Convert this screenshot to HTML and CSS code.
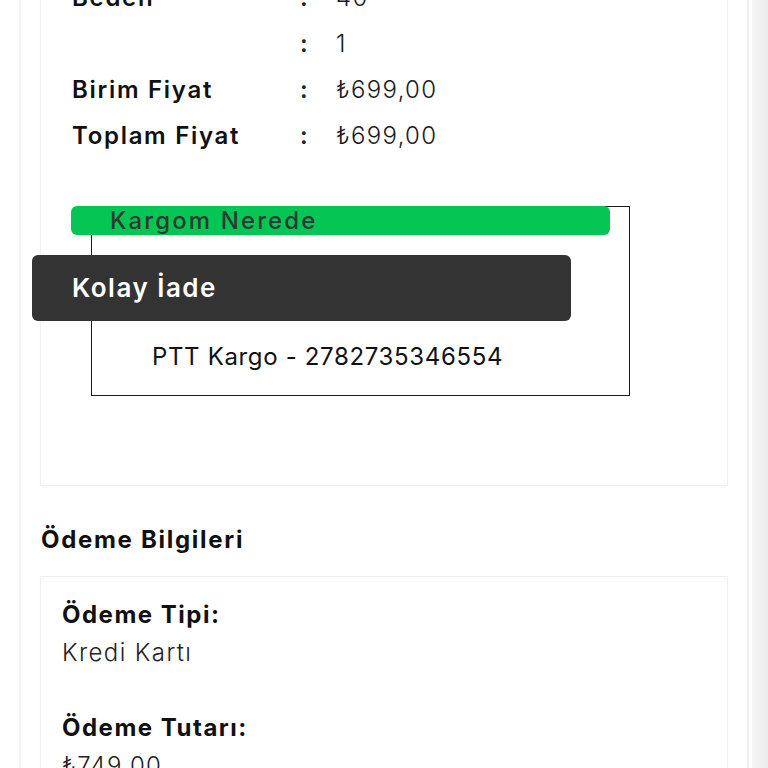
FILE: index.html
```html
<!DOCTYPE html>
<html lang="tr">
<head>
<meta charset="utf-8">
<title>Sipariş Detayı</title>
<link rel="stylesheet" href="styles.css">
</head>
<body>
<div class="page">
  <div class="frame">
    <div class="card order-card">
      <div class="info-row"><span class="label">Beden</span><span class="colon">:</span><span class="value">40</span></div>
      <div class="info-row"><span class="label"></span><span class="colon">:</span><span class="value">1</span></div>
      <div class="info-row"><span class="label">Birim Fiyat</span><span class="colon">:</span><span class="value">₺699,00</span></div>
      <div class="info-row"><span class="label">Toplam Fiyat</span><span class="colon">:</span><span class="value">₺699,00</span></div>
      <div class="track-box">
        <div class="track-btn">Kargom Nerede</div>
        <div class="return-btn">Kolay İade</div>
        <div class="track-text">PTT Kargo - 2782735346554</div>
      </div>
    </div>
    <h3 class="section-title">Ödeme Bilgileri</h3>
    <div class="card pay-card">
      <div class="pay-label">Ödeme Tipi:</div>
      <div class="pay-value">Kredi Kartı</div>
      <div class="pay-label second">Ödeme Tutarı:</div>
      <div class="pay-value">₺749,00</div>
    </div>
  </div>
  <div class="scrollbar"></div>
</div>
</body>
</html>
```
FILE: styles.css
```css
html, body {
  margin: 0;
  padding: 0;
  background: #ffffff;
  overflow: hidden;
}
body {
  font-family: Inter, "DejaVu Sans", sans-serif;
  color: #111;
}
.page {
  display: flex;
  align-items: stretch;
  margin-top: -58px;
  min-height: 1000px;
}
.frame {
  margin-left: 19px;
  width: 730px;
  box-sizing: border-box;
  border-left: 2px solid #f3f3f3;
  border-right: 2px solid #f0f0f0;
  padding: 0 19px;
}
.scrollbar {
  margin-left: 3px;
  width: 16px;
  background: linear-gradient(to right, #f6f6f6, #ebebeb);
}
.card {
  background: #fff;
  border: 1px solid #efefef;
  box-shadow: 0 1px 2px rgba(0, 0, 0, 0.03);
}
.order-card {
  padding: 32px 0 89px 31px;
}
.info-row {
  display: grid;
  grid-template-columns: 228px 36px auto;
  height: 46px;
  line-height: 46px;
  font-size: 24px;
}
.label {
  font-weight: 600;
  letter-spacing: 1.7px;
  color: #111;
}
.colon {
  font-weight: 600;
  color: #222;
}
.value {
  font-weight: 300;
  color: #1a1a1a;
  letter-spacing: 1.3px;
}
.track-box {
  margin-top: 47px;
  margin-left: 19px;
  width: 539px;
  box-sizing: border-box;
  border: 1px solid #1a1a1a;
  padding-bottom: 23px;
}
.track-btn {
  margin: -1px 0 0 -21px;
  width: 539px;
  height: 29px;
  box-sizing: border-box;
  padding-left: 39px;
  line-height: 29px;
  background: #05c655;
  border-radius: 6px;
  color: #2d3a31;
  font-size: 24px;
  font-weight: 500;
  letter-spacing: 2.1px;
}
.return-btn {
  margin: 20px 0 0 -60px;
  width: 539px;
  height: 66px;
  box-sizing: border-box;
  padding-left: 40px;
  line-height: 66px;
  background: #333333;
  border-radius: 6px;
  color: #fff;
  font-size: 26px;
  font-weight: 600;
  letter-spacing: 1.5px;
}
.track-text {
  margin-top: 21px;
  padding-left: 60px;
  line-height: 30px;
  font-size: 24px;
  font-weight: 400;
  color: #111;
  letter-spacing: 0.65px;
}
.section-title {
  margin: 39px 0 21px 1px;
  line-height: 30px;
  font-size: 24px;
  font-weight: 700;
  color: #111;
  letter-spacing: 1.7px;
}
.pay-card {
  padding: 23px 21px 40px 21px;
}
.pay-label {
  line-height: 30px;
  font-size: 24px;
  font-weight: 700;
  color: #111;
  letter-spacing: 1.5px;
}
.pay-label.second {
  margin-top: 45px;
}
.pay-value {
  margin-top: 8px;
  line-height: 30px;
  font-size: 24px;
  font-weight: 300;
  color: #222;
  letter-spacing: 1.4px;
}
```
